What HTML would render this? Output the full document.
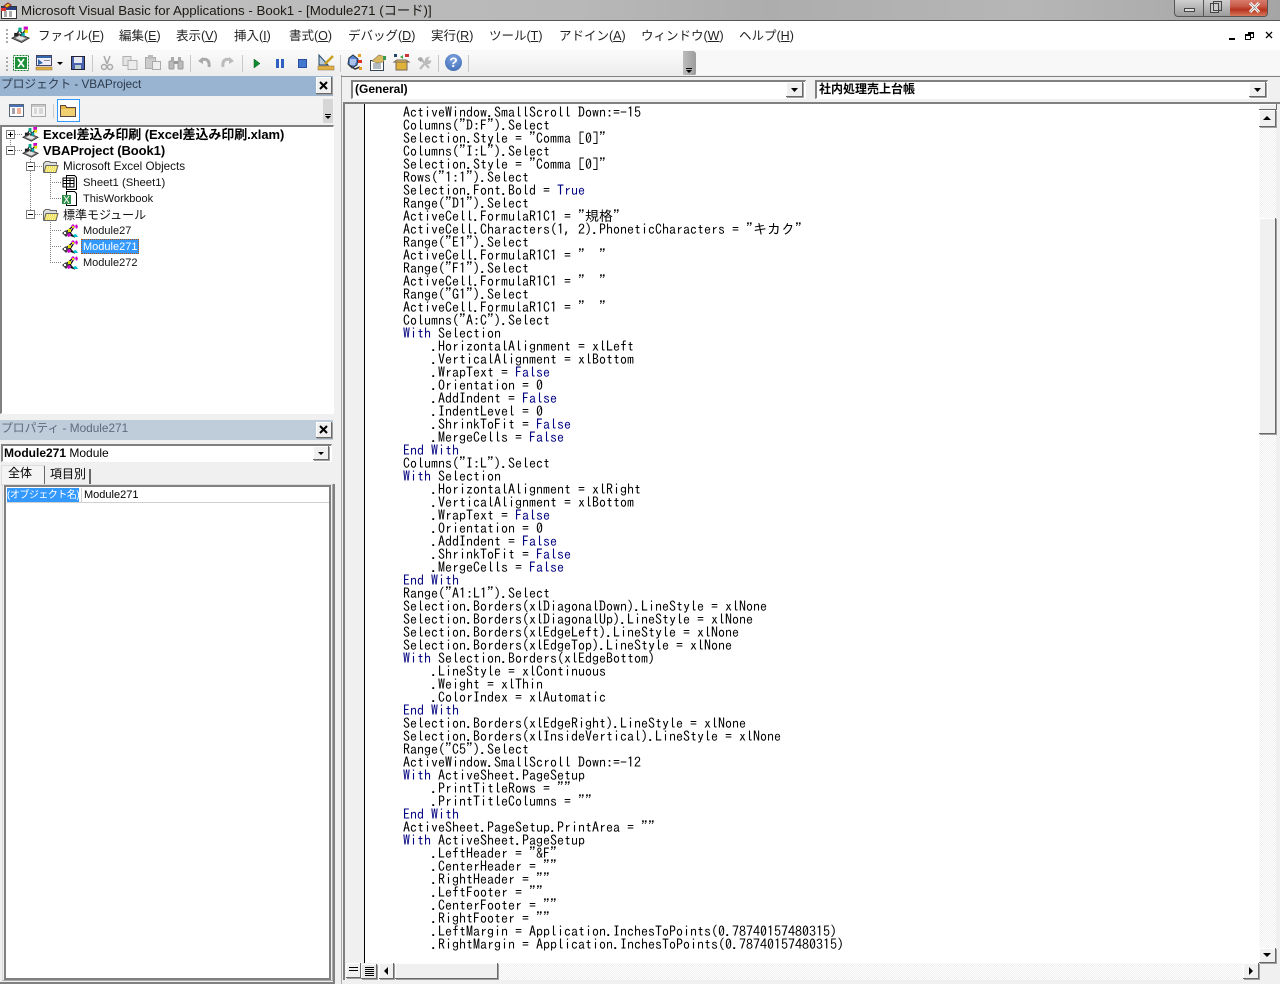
<!DOCTYPE html>
<html lang="ja"><head><meta charset="utf-8"><title>VBA</title>
<style>
html,body{margin:0;padding:0;width:1280px;height:984px;overflow:hidden;background:#f0f0f0}
body{position:relative;font-family:"Liberation Sans","Noto Sans CJK JP",sans-serif;font-size:12px;color:#000}
.a{position:absolute;white-space:pre}
.b{position:absolute;background:#f0f0f0;box-sizing:border-box;box-shadow:inset -1px -1px #696969,inset 1px 1px #fff,1px 1px #a0a0a0}
.s{position:absolute;box-sizing:border-box;background:#fff;border-top:2px solid #808080;border-left:2px solid #808080;border-right:1px solid #fff;border-bottom:1px solid #fff}
.m{font-size:12.500px;top:28px;line-height:17px;color:#222}
.m u{text-decoration:underline}
.t{font-size:11px;line-height:16px;color:#111}
.tb{font-weight:bold;font-size:13px;letter-spacing:-.08px;line-height:16px;color:#000}
#code{position:absolute;left:403px;top:106px;margin:0;font:14px/13px "IPAGothic","Liberation Mono",monospace;color:#000;white-space:pre}
#code i{font-style:normal;color:#000080}
.dot{position:absolute;background:repeating-linear-gradient(90deg,#808080 0 1px,transparent 1px 2px);height:1px}
.dotv{position:absolute;background:repeating-linear-gradient(0deg,#808080 0 1px,transparent 1px 2px);width:1px}
.pm{position:absolute;width:9px;height:9px;box-sizing:border-box;border:1px solid #808080;background:#fff}
.pm:before{content:"";position:absolute;left:1px;top:3px;width:5px;height:1px;background:#000}
.pm.p:after{content:"";position:absolute;left:3px;top:1px;width:1px;height:5px;background:#000}
svg{position:absolute;overflow:visible}
.track{position:absolute;background:repeating-conic-gradient(#f0f0f0 0 25%,#fff 0 50%) 0 0/2px 2px}
</style></head><body>
<svg width="0" height="0" style="position:absolute"><defs>
<symbol id="proj" viewBox="0 0 18 16"><path d="M1 11l7-4 9 4-7 4z" fill="#e4e4e4" stroke="#333"/><path d="M3 11l5-3 7 3-5 3z" fill="none" stroke="#777"/><path d="M5 9l3-6 4 6M9 9l5-6" stroke="#222" fill="none" stroke-width="1.400"/><rect x="3" y="6" width="4" height="3" fill="#222"/><rect x="7" y="1" width="3" height="4" fill="#0a8"/><rect x="12" y="0" width="4" height="3" fill="#c0c"/><rect x="13" y="3" width="3" height="3" fill="#dd0"/><rect x="10" y="6" width="3" height="3" fill="#0aa"/></symbol>
<symbol id="mod" viewBox="0 0 16 14"><path d="M3 9L10 3M8 9l4-6M5 10l8 3M6 6l5 6" stroke="#111" fill="none" stroke-width="1.300"/><path d="M0 9l4-3 4 3-4 4z" fill="#444"/><rect x="2" y="8" width="2" height="2" fill="#fff"/><path d="M9 2l2-2 2 2-2 3z" fill="#c0c"/><path d="M13 3l1-3 2 2-1 3z" fill="#c0c"/><rect x="10" y="2" width="2" height="2" fill="#dd0"/><path d="M5 10l3-1 1 3-3 1z" fill="#c0c"/><rect x="6" y="5" width="3" height="3" fill="#dd0"/><path d="M11 11l3-1 2 3h-4z" fill="#0bc"/></symbol>
<symbol id="fold" viewBox="0 0 16 12"><path d="M.5 11.500v-9l2-2h4l1 1h6v2" fill="#ddd" stroke="#666"/><path d="M1 11.500l2-7h12l-2 7z" fill="#f0e050" stroke="#666"/><path d="M4 6h9M3.500 8h9M3 10h9" stroke="#fff" stroke-dasharray="1 1"/></symbol>
</defs></svg>

<!-- title bar -->
<div class="a" style="left:0;top:0;width:1280px;height:21px;background:linear-gradient(90deg,#c3c3c3 0,#bdbdbd 20%,#b8b8b8 45%,#adadad 60%,#b6b6b6 80%,#a5a5a5 100%)"></div>
<div class="a" style="left:0;top:20px;width:1280px;height:1px;background:#555"></div>
<svg style="left:1px;top:3px" width="17" height="16"><rect x=".5" y="3.500" width="15" height="12" fill="#fff" stroke="#333"/><rect x="1" y="4" width="14" height="3" fill="#2a3f80"/><path d="M3 9h3M8 9h3M3 11h3M8 11h3M3 13h3M8 13h3" stroke="#555"/><path d="M3 3l4-3 3 2-4 3z" fill="#e8c020" stroke="#823"/><rect x="0" y="5" width="5" height="3" fill="#d33"/></svg>
<div class="a" style="left:21px;top:2px;font-size:13.300px;line-height:18px;color:#1d1a14">Microsoft Visual Basic for Applications - Book1 - [Module271 (コード)]</div>
<div class="a" style="left:1174px;top:0;width:94px;height:17px;border:1px solid #555;border-top:0;border-radius:0 0 4px 4px;box-sizing:border-box;overflow:hidden;background:linear-gradient(#cfcfcf,#9c9c9c)">
<div class="a" style="left:28px;top:0;width:1px;height:16px;background:#555"></div>
<div class="a" style="left:55px;top:0;width:38px;height:16px;background:linear-gradient(#d77c6e 0,#c85a48 40%,#b6321c 60%,#d67a5c 100%)"></div>
<div class="a" style="left:9px;top:8px;width:11px;height:4px;background:#ddd;border:1px solid #444;box-sizing:border-box"></div>
<div class="a" style="left:35px;top:3px;width:9px;height:10px;border:1px solid #444;box-sizing:border-box;background:#ccc"></div>
<div class="a" style="left:38px;top:1px;width:9px;height:10px;border:1px solid #444;box-sizing:border-box"></div>
</div>
<svg style="left:1248px;top:2px" width="14" height="12"><path d="M2 1l9 9M11 1l-9 9" stroke="#fff" stroke-width="3"/><path d="M2 1l9 9M11 1l-9 9" stroke="#777" stroke-width=".6"/></svg>

<!-- menu -->
<div class="a" style="left:0;top:21px;width:1280px;height:29px;background:#fff"></div>
<div class="dotv" style="left:6px;top:27px;height:16px;background:repeating-linear-gradient(0deg,#aaa 0 2px,transparent 2px 4px);width:2px"></div>
<svg style="left:11px;top:26px" width="19" height="19"><use href="#proj" width="19" height="18"/></svg>
<div class="a m" style="left:38px">ファイル(<u>F</u>)</div>
<div class="a m" style="left:119px">編集(<u>E</u>)</div>
<div class="a m" style="left:176px">表示(<u>V</u>)</div>
<div class="a m" style="left:234px">挿入(<u>I</u>)</div>
<div class="a m" style="left:289px">書式(<u>O</u>)</div>
<div class="a m" style="left:348px">デバッグ(<u>D</u>)</div>
<div class="a m" style="left:431px">実行(<u>R</u>)</div>
<div class="a m" style="left:489px">ツール(<u>T</u>)</div>
<div class="a m" style="left:559px">アドイン(<u>A</u>)</div>
<div class="a m" style="left:641px">ウィンドウ(<u>W</u>)</div>
<div class="a m" style="left:739px">ヘルプ(<u>H</u>)</div>
<div class="a" style="left:1229px;top:38px;width:6px;height:2px;background:#000"></div>
<div class="a" style="left:1248px;top:32px;width:6px;height:6px;border:1px solid #000;border-top-width:2px;box-sizing:border-box"></div>
<div class="a" style="left:1245px;top:34px;width:6px;height:6px;border:1px solid #000;border-top-width:2px;box-sizing:border-box;background:#fff"></div>
<svg style="left:1265px;top:31px" width="9" height="9"><path d="M1 1l6 6M7 1l-6 6" stroke="#000" stroke-width="1.300"/></svg>

<!-- toolbar -->
<div class="a" style="left:0;top:50px;width:1280px;height:26px;background:#f8f8f8"></div>
<div class="a" style="left:0;top:51px;width:696px;height:25px;background:linear-gradient(#fbfbfb,#ececec)"></div>
<div class="a" style="left:683px;top:51px;width:13px;height:25px;background:linear-gradient(90deg,#bdbdbd,#9c9c9c);border-radius:0 3px 3px 0"></div>
<div class="a" style="left:686px;top:68px;width:6px;height:1px;background:#000"></div>
<svg style="left:686px;top:70px" width="6" height="4"><path d="M0 0h6l-3 3z" fill="#000"/></svg>
<div class="dotv" style="left:6px;top:55px;height:16px;background:repeating-linear-gradient(0deg,#aaa 0 2px,transparent 2px 4px);width:2px"></div>
<svg style="left:13px;top:55px" width="16" height="16"><rect x=".5" y=".5" width="15" height="15" fill="#fff" stroke="#1a7a30" stroke-dasharray="2 1"/><rect x="2" y="2" width="12" height="12" fill="#1f8f3a"/><path d="M5 4l6 8M11 4l-6 8" stroke="#fff" stroke-width="1.600"/></svg>
<svg style="left:36px;top:55px" width="17" height="16"><rect x=".5" y=".5" width="15" height="10" fill="#eef" stroke="#446"/><rect x="1" y="1" width="14" height="2" fill="#36a"/><path d="M2 4l5 4-5 2z" fill="#36a"/><rect x="8" y="5" width="6" height="1" fill="#888"/><rect x="0" y="12" width="16" height="3" fill="#e0b040" stroke="#864" stroke-width=".5"/></svg>
<svg style="left:57px;top:62px" width="7" height="4"><path d="M0 0h6l-3 3z" fill="#000"/></svg>
<svg style="left:71px;top:56px" width="14" height="14"><rect x=".5" y=".5" width="13" height="13" fill="#4a63b0" stroke="#223"/><rect x="3" y="1" width="8" height="6" fill="#e8e8f4"/><rect x="4" y="9" width="6" height="4" fill="#bcc"/></svg>
<div class="a" style="left:92px;top:55px;width:1px;height:17px;background:#c8c8c8"></div>
<svg style="left:100px;top:55px" width="14" height="16"><path d="M4 1l3 8M10 1L7 9" stroke="#a8a8a8" stroke-width="1.500"/><circle cx="4" cy="12" r="2.500" fill="none" stroke="#a8a8a8" stroke-width="1.500"/><circle cx="10" cy="12" r="2.500" fill="none" stroke="#a8a8a8" stroke-width="1.500"/></svg>
<svg style="left:122px;top:56px" width="16" height="14"><rect x="1" y=".5" width="8" height="9" fill="#e4e4e4" stroke="#b0b0b0"/><rect x="6" y="4.500" width="9" height="9" fill="#ececec" stroke="#b0b0b0"/></svg>
<svg style="left:145px;top:55px" width="16" height="15"><rect x=".5" y="2.500" width="10" height="11" fill="#ccc" stroke="#aaa"/><rect x="3" y="0" width="5" height="4" fill="#bbb"/><rect x="7.500" y="6.500" width="8" height="8" fill="#eee" stroke="#aaa"/></svg>
<svg style="left:168px;top:56px" width="16" height="14"><rect x="1" y="5" width="5" height="8" rx="1" fill="#bbb" stroke="#999"/><rect x="10" y="5" width="5" height="8" rx="1" fill="#bbb" stroke="#999"/><rect x="3" y="1" width="3" height="5" fill="#aaa"/><rect x="10" y="1" width="3" height="5" fill="#aaa"/><rect x="6" y="5" width="4" height="3" fill="#999"/></svg>
<div class="a" style="left:190px;top:55px;width:1px;height:17px;background:#c8c8c8"></div>
<svg style="left:198px;top:56px" width="14" height="14"><path d="M3 4c5-2 9 0 8 7" fill="none" stroke="#aaa" stroke-width="3"/><path d="M0 5l5-4v7z" fill="#aaa"/></svg>
<svg style="left:220px;top:56px" width="14" height="14"><path d="M11 4c-5-2-9 0-8 7" fill="none" stroke="#bbb" stroke-width="3"/><path d="M14 5L9 1v7z" fill="#bbb"/></svg>
<div class="a" style="left:242px;top:55px;width:1px;height:17px;background:#c8c8c8"></div>
<svg style="left:253px;top:58px" width="8" height="11"><path d="M1 1l6 4.500L1 10z" fill="#0c8a30" stroke="#086020" stroke-width=".5"/></svg>
<div class="a" style="left:276px;top:59px;width:3px;height:9px;background:#2f5fc0"></div><div class="a" style="left:281px;top:59px;width:3px;height:9px;background:#2f5fc0"></div>
<div class="a" style="left:298px;top:59px;width:9px;height:9px;background:#4477d0;border:1px solid #2a4fa0;box-sizing:border-box"></div>
<svg style="left:318px;top:54px" width="17" height="17"><rect x="0" y="12" width="16" height="4" fill="#e0b040" stroke="#864" stroke-width=".5"/><path d="M1 1v10h9z" fill="#bcd" stroke="#246"/><path d="M7 10L15 2" stroke="#c8a020" stroke-width="2.500"/></svg>
<div class="a" style="left:340px;top:55px;width:1px;height:17px;background:#c8c8c8"></div>
<svg style="left:347px;top:54px" width="16" height="17"><path d="M2 4l4-3 5 4-1 6-5 3-4-4z" fill="#5a85d0" stroke="#234"/><path d="M3 6h6M3 8h6M3 10h5" stroke="#fff"/><path d="M2 11l6 4 5-2" fill="none" stroke="#333" stroke-width="1.500"/><rect x="11" y="0" width="3" height="3" fill="#e8a020"/><rect x="11" y="6" width="4" height="3" fill="#e03020"/><rect x="12" y="13" width="3" height="3" fill="#e8a020"/></svg>
<svg style="left:370px;top:55px" width="17" height="16"><rect x=".5" y="5.500" width="13" height="10" fill="#fff" stroke="#345"/><path d="M3 9h8M3 11h8M3 13h8" stroke="#678"/><path d="M2 6l7-6 7 2-3 5-6 1z" fill="#d8b860" stroke="#875" stroke-width=".6"/><rect x="13" y="1" width="3" height="4" fill="#3a9a50"/></svg>
<svg style="left:393px;top:54px" width="17" height="16"><path d="M3 8h11v8H3z" fill="#dfb23a" stroke="#765"/><path d="M1 8l3-2h9l3 2z" fill="#eccb60" stroke="#765"/><rect x="1" y="0" width="3" height="3" fill="#246"/><path d="M7 3l3-2v4z" fill="#4a4"/><rect x="12" y="0" width="4" height="3" fill="#c33"/></svg>
<svg style="left:417px;top:56px" width="15" height="14"><path d="M3 13L9 6M4 3l8 9" stroke="#bbb" stroke-width="2.200"/><path d="M8 6c-1-3 2-6 5-5l-2 2 1 2 2-1c1 3-2 5-5 4z" fill="#bbb"/><path d="M1 2l3-1 2 2-2 3-3-2z" fill="#aaa"/></svg>
<div class="a" style="left:438px;top:55px;width:1px;height:17px;background:#c8c8c8"></div>
<div class="a" style="left:445px;top:54px;width:17px;height:17px;border-radius:50%;background:radial-gradient(circle at 50% 30%,#7ea4e0,#3a66b0);color:#fff;font:bold 14px/17px 'Liberation Sans',sans-serif;text-align:center">?</div>
<div class="a" style="left:468px;top:55px;width:1px;height:17px;background:#c8c8c8"></div>

<!-- project panel -->
<div class="a" style="left:0;top:76px;width:333px;height:20px;background:#99b4d1"></div>
<div class="a" style="left:1px;top:76px;font-size:11.700px;line-height:17px;color:#2c3a4c">プロジェクト - VBAProject</div>
<div class="b" style="left:316px;top:77px;width:16px;height:17px"></div>
<svg style="left:319px;top:81px" width="10" height="10"><path d="M1 1l7 7M8 1l-7 7" stroke="#000" stroke-width="2"/></svg>
<div class="a" style="left:0;top:97px;width:334px;height:26px;background:#f2f2f2"></div>
<svg style="left:9px;top:104px" width="15" height="13"><rect x=".5" y=".5" width="14" height="12" fill="#fff" stroke="#567"/><rect x="1" y="1" width="13" height="2" fill="#4a72b8"/><path d="M3 5h3M3 7h3M3 9h3" stroke="#445"/><path d="M8 5h4M8 7h4M8 9h4" stroke="#e06030"/></svg>
<svg style="left:31px;top:104px" width="15" height="13"><rect x=".5" y=".5" width="14" height="12" fill="#f4f4f4" stroke="#aaa"/><rect x="1" y="1" width="13" height="2" fill="#c8c8c8"/><path d="M3 5h3M3 7h3M3 9h3M8 5h4M8 7h4M8 9h4" stroke="#bbb"/></svg>
<div class="a" style="left:53px;top:104px;width:1px;height:14px;background:#ccc"></div>
<div class="a" style="left:57px;top:99px;width:23px;height:23px;box-sizing:border-box;border:1px solid #3399ff;background:#fff"></div>
<svg style="left:60px;top:104px" width="16" height="13"><path d="M.5 12.500v-11h5l1 2h9v9z" fill="#e8b840" stroke="#544"/><rect x="1" y="5" width="14" height="7" fill="#f0d070"/></svg>
<div class="a" style="left:323px;top:99px;width:10px;height:24px;background:#d6d6d6"></div>
<div class="a" style="left:325px;top:114px;width:6px;height:1px;background:#000"></div>
<svg style="left:325px;top:116px" width="6" height="4"><path d="M0 0h6l-3 3z" fill="#000"/></svg>

<div class="s" style="left:0;top:125px;width:334px;height:289px"></div>
<div class="dotv" style="left:10px;top:140px;height:5px"></div>
<div class="dot" style="left:15px;top:134px;width:8px"></div>
<div class="dot" style="left:15px;top:150px;width:8px"></div>
<div class="dotv" style="left:30px;top:158px;height:56px"></div>
<div class="dot" style="left:35px;top:166px;width:8px"></div>
<div class="dot" style="left:35px;top:214px;width:8px"></div>
<div class="dotv" style="left:50px;top:174px;height:25px"></div>
<div class="dotv" style="left:50px;top:222px;height:41px"></div>
<div class="dot" style="left:50px;top:182px;width:11px"></div>
<div class="dot" style="left:50px;top:198px;width:11px"></div>
<div class="dot" style="left:50px;top:230px;width:11px"></div>
<div class="dot" style="left:50px;top:246px;width:11px"></div>
<div class="dot" style="left:50px;top:262px;width:11px"></div>
<div class="pm p" style="left:6px;top:130px"></div>
<div class="pm" style="left:6px;top:146px"></div>
<div class="pm" style="left:26px;top:162px"></div>
<div class="pm" style="left:26px;top:210px"></div>
<svg style="left:22px;top:127px" width="17" height="15"><use href="#proj" width="17" height="15"/></svg>
<svg style="left:22px;top:143px" width="17" height="15"><use href="#proj" width="17" height="15"/></svg>
<svg style="left:43px;top:161px" width="16" height="12"><use href="#fold" width="16" height="12"/></svg>
<svg style="left:43px;top:209px" width="16" height="12"><use href="#fold" width="16" height="12"/></svg>
<svg style="left:62px;top:175px" width="16" height="15"><path d="M4.500 .5h8l2 2v12h-10z" fill="#fff" stroke="#000"/><rect x="1" y="3" width="11" height="9" fill="#fff" stroke="#000"/><path d="M1 5.500h11M1 8.500h11M4.500 3v9M8 3v9" stroke="#000"/></svg>
<svg style="left:62px;top:191px" width="16" height="15"><path d="M4.500 .5h8l2 2v12h-10z" fill="#fff" stroke="#000"/><rect x="0" y="4" width="9" height="9" fill="#2f8f4a"/><path d="M2 5l5 7M7 5l-5 7" stroke="#fff"/></svg>
<svg style="left:62px;top:224px" width="16" height="14"><use href="#mod" width="16" height="14"/></svg>
<svg style="left:62px;top:240px" width="16" height="14"><use href="#mod" width="16" height="14"/></svg>
<svg style="left:62px;top:256px" width="16" height="14"><use href="#mod" width="16" height="14"/></svg>
<div class="a tb" style="left:43px;top:127px">Excel差込み印刷 (Excel差込み印刷.xlam)</div>
<div class="a tb" style="left:43px;top:143px">VBAProject (Book1)</div>
<div class="a t" style="left:63px;top:159px;font-size:11.700px">Microsoft Excel Objects</div>
<div class="a t" style="left:83px;top:175px;font-size:11.300px">Sheet1 (Sheet1)</div>
<div class="a t" style="left:83px;top:191px">ThisWorkbook</div>
<div class="a t" style="left:63px;top:207px;font-size:12px">標準モジュール</div>
<div class="a t" style="left:83px;top:223px">Module27</div>
<div class="a" style="left:81px;top:239px;width:58px;height:15px;background:#3399ff;outline:1px dotted #c05000;outline-offset:-1px"></div>
<div class="a t" style="left:83px;top:239px;color:#fff">Module271</div>
<div class="a t" style="left:83px;top:255px">Module272</div>

<!-- properties -->
<div class="a" style="left:0;top:420px;width:333px;height:20px;background:#bfcddb"></div>
<div class="a" style="left:1px;top:420px;font-size:11.800px;line-height:17px;color:#5d6b7c">プロパティ - Module271</div>
<div class="b" style="left:316px;top:422px;width:16px;height:16px"></div>
<svg style="left:319px;top:425px" width="10" height="10"><path d="M1 1l7 7M8 1l-7 7" stroke="#000" stroke-width="2"/></svg>
<div class="s" style="left:1px;top:444px;width:331px;height:18px"></div>
<div class="a" style="left:4px;top:445px;font-size:12px;line-height:16px"><b>Module271</b> Module</div>
<div class="b" style="left:313px;top:446px;width:16px;height:14px"></div>
<svg style="left:318px;top:452px" width="7" height="4"><path d="M0 0h6l-3 3z" fill="#000"/></svg>
<div class="a" style="left:1px;top:465px;width:44px;height:21px;background:#f4f4f4;border:1px solid #ddd;border-bottom:0;border-right:1px solid #696969;box-sizing:border-box;border-radius:2px 2px 0 0"></div>
<div class="a" style="left:8px;top:465px;font-size:12px;line-height:17px">全体</div>
<div class="a" style="left:46px;top:469px;width:45px;height:15px;border-right:2px solid #696969;box-sizing:border-box"></div>
<div class="a" style="left:50px;top:466px;font-size:12px;line-height:17px">項目別</div>
<div class="a" style="left:0;top:982px;width:335px;height:2px;background:#808080"></div>
<div class="a" style="left:333px;top:484px;width:2px;height:500px;background:#808080"></div>
<div class="a" style="left:2px;top:484px;width:331px;height:497px;box-sizing:border-box;border:1px solid #ddd;border-right:1px solid #aaa;border-bottom:1px solid #aaa"></div>
<div class="a" style="left:4px;top:485px;width:327px;height:495px;box-sizing:border-box;background:#fff;border:2px solid #808080;border-right:2px solid #808080;border-bottom:2px solid #808080"></div>
<div class="a" style="left:7px;top:488px;width:72px;height:14px;background:#3399ff"></div>
<div class="a" style="left:7px;top:502px;width:322px;height:1px;background:#d0d0d0"></div>
<div class="a" style="left:81px;top:488px;width:1px;height:14px;background:#d0d0d0"></div>
<div class="a" style="left:7px;top:488px;font-size:10px;letter-spacing:-.5px;line-height:15px;color:#fff">(オブジェクト名)</div>
<div class="a" style="left:84px;top:488px;font-size:11px;line-height:15px">Module271</div>

<!-- code window -->
<div class="a" style="left:341px;top:75px;width:939px;height:909px;background:#f0f0f0;border-left:1px solid #aaa;box-sizing:border-box"></div>
<div class="a" style="left:341px;top:76px;width:939px;height:1px;background:#808080"></div>
<div class="s" style="left:351px;top:80px;width:455px;height:19px"></div>
<div class="a" style="left:355px;top:81px;font-size:12px;font-weight:bold;line-height:16px">(General)</div>
<div class="b" style="left:786px;top:82px;width:17px;height:15px"></div>
<svg style="left:791px;top:88px" width="7" height="4"><path d="M0 0h7l-3.500 4z" fill="#000"/></svg>
<div class="s" style="left:815px;top:80px;width:453px;height:19px"></div>
<div class="a" style="left:819px;top:81px;font-size:12px;font-weight:bold;line-height:16px">社内処理売上台帳</div>
<div class="b" style="left:1249px;top:82px;width:17px;height:15px"></div>
<svg style="left:1254px;top:88px" width="7" height="4"><path d="M0 0h7l-3.500 4z" fill="#000"/></svg>

<div class="a" style="left:343px;top:102px;width:937px;height:2px;background:#808080"></div>
<div class="a" style="left:343px;top:102px;width:2px;height:878px;background:#808080"></div>
<div class="a" style="left:345px;top:104px;width:20px;height:859px;background:#f0f0f0;border-right:1px solid #000;box-sizing:border-box"></div>
<div class="a" style="left:365px;top:104px;width:894px;height:859px;background:#fff"></div>

<pre id="code">ActiveWindow.SmallScroll Down:=-15
Columns("D:F").Select
Selection.Style = "Comma [0]"
Columns("I:L").Select
Selection.Style = "Comma [0]"
Rows("1:1").Select
Selection.Font.Bold = <i>True</i>
Range("D1").Select
ActiveCell.FormulaR1C1 = "規格"
ActiveCell.Characters(1, 2).PhoneticCharacters = "キカク"
Range("E1").Select
ActiveCell.FormulaR1C1 = "　"
Range("F1").Select
ActiveCell.FormulaR1C1 = "　"
Range("G1").Select
ActiveCell.FormulaR1C1 = "　"
Columns("A:C").Select
<i>With</i> Selection
    .HorizontalAlignment = xlLeft
    .VerticalAlignment = xlBottom
    .WrapText = <i>False</i>
    .Orientation = 0
    .AddIndent = <i>False</i>
    .IndentLevel = 0
    .ShrinkToFit = <i>False</i>
    .MergeCells = <i>False</i>
<i>End With</i>
Columns("I:L").Select
<i>With</i> Selection
    .HorizontalAlignment = xlRight
    .VerticalAlignment = xlBottom
    .WrapText = <i>False</i>
    .Orientation = 0
    .AddIndent = <i>False</i>
    .ShrinkToFit = <i>False</i>
    .MergeCells = <i>False</i>
<i>End With</i>
Range("A1:L1").Select
Selection.Borders(xlDiagonalDown).LineStyle = xlNone
Selection.Borders(xlDiagonalUp).LineStyle = xlNone
Selection.Borders(xlEdgeLeft).LineStyle = xlNone
Selection.Borders(xlEdgeTop).LineStyle = xlNone
<i>With</i> Selection.Borders(xlEdgeBottom)
    .LineStyle = xlContinuous
    .Weight = xlThin
    .ColorIndex = xlAutomatic
<i>End With</i>
Selection.Borders(xlEdgeRight).LineStyle = xlNone
Selection.Borders(xlInsideVertical).LineStyle = xlNone
Range("C5").Select
ActiveWindow.SmallScroll Down:=-12
<i>With</i> ActiveSheet.PageSetup
    .PrintTitleRows = ""
    .PrintTitleColumns = ""
<i>End With</i>
ActiveSheet.PageSetup.PrintArea = ""
<i>With</i> ActiveSheet.PageSetup
    .LeftHeader = "&amp;F"
    .CenterHeader = ""
    .RightHeader = ""
    .LeftFooter = ""
    .CenterFooter = ""
    .RightFooter = ""
    .LeftMargin = Application.InchesToPoints(0.78740157480315)
    .RightMargin = Application.InchesToPoints(0.78740157480315)</pre>

<!-- v scrollbar -->
<div class="a" style="left:1259px;top:104px;width:18px;height:6px;background:#f0f0f0;box-shadow:inset -1px -1px #696969,inset 1px 1px #fff"></div>
<div class="track" style="left:1259px;top:127px;width:17px;height:821px"></div>
<div class="b" style="left:1259px;top:110px;width:17px;height:17px"></div>
<svg style="left:1263px;top:116px" width="9" height="5"><path d="M4 0l4 4H0z" fill="#000"/></svg>
<div class="b" style="left:1259px;top:218px;width:17px;height:216px"></div>
<div class="b" style="left:1259px;top:948px;width:17px;height:15px"></div>
<svg style="left:1263px;top:953px" width="9" height="5"><path d="M0 0h8L4 4z" fill="#000"/></svg>
<!-- h scrollbar -->
<div class="track" style="left:377px;top:963px;width:882px;height:17px"></div>
<div class="b" style="left:346px;top:963px;width:15px;height:15px"></div>
<div class="a" style="left:349px;top:967px;width:9px;height:1px;background:#000"></div><div class="a" style="left:349px;top:970px;width:9px;height:1px;background:#000"></div>
<div class="b" style="left:361px;top:964px;width:16px;height:15px;background:#e8e8e8"></div>
<div class="a" style="left:365px;top:967px;width:9px;height:9px;background:repeating-linear-gradient(#000 0 1px,transparent 1px 2px)"></div>
<div class="b" style="left:379px;top:963px;width:15px;height:16px"></div>
<svg style="left:384px;top:967px" width="5" height="9"><path d="M4 0v8L0 4z" fill="#000"/></svg>
<div class="b" style="left:395px;top:963px;width:103px;height:16px"></div>
<div class="b" style="left:1243px;top:963px;width:16px;height:16px"></div>
<svg style="left:1249px;top:967px" width="5" height="9"><path d="M0 0v8l4-4z" fill="#000"/></svg>
</body></html>
